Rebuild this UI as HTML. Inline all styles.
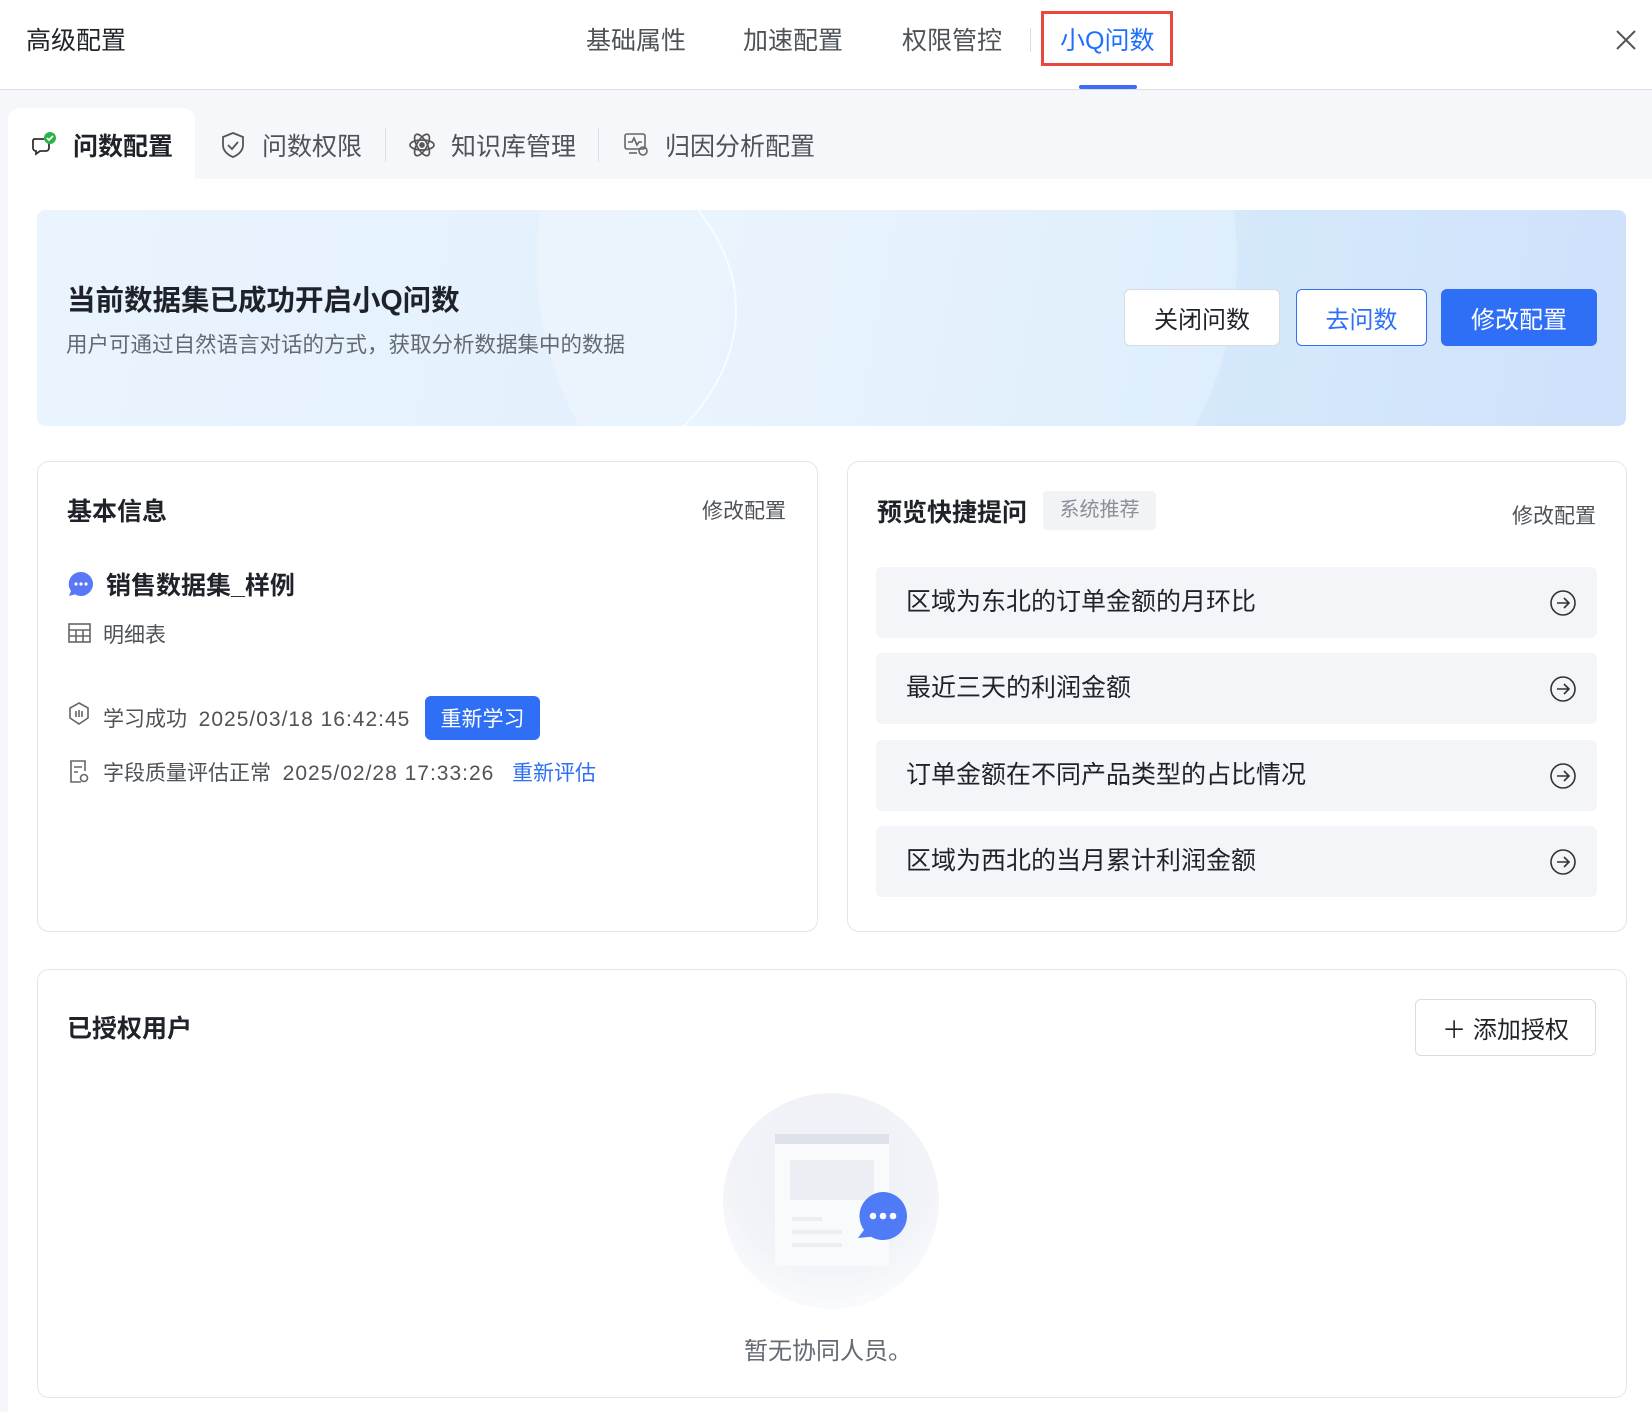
<!DOCTYPE html><html><head><meta charset="utf-8"><style>
*{box-sizing:border-box;margin:0;padding:0}
body{width:1652px;height:1412px;overflow:hidden;background:#fff;font-family:"Liberation Sans","Noto Sans CJK SC",sans-serif;color:#1f2329;position:relative}
.a{position:absolute;white-space:nowrap}
.hdr{position:absolute;left:0;top:0;width:1652px;height:90px;border-bottom:1px solid #dcdee3;background:#fff}
.sub{position:absolute;left:0;top:90px;width:1652px;height:1322px;background:#f6f7fb}
.card{position:absolute;border:1px solid #e3e5ea;border-radius:12px;background:#fff}
.btn{position:absolute;border-radius:6px;display:flex;align-items:center;justify-content:center;font-size:24px}
.row{position:absolute;left:876px;width:721px;height:71px;background:#f3f5f8;border-radius:6px;font-size:25px;color:#1f2329;padding-left:30px;line-height:71px}
.row svg{position:absolute;right:20px;top:22px}
.t{font-size:25px;color:#4e5358}
.d{letter-spacing:1px}
</style></head><body>
<div class="hdr"></div>
<div class="a" style="left:26px;top:21px;font-size:25px;color:#1f2329">高级配置</div>
<div class="a t" style="left:586px;top:21px">基础属性</div>
<div class="a t" style="left:743px;top:21px">加速配置</div>
<div class="a t" style="left:902px;top:21px">权限管控</div>
<div class="a" style="left:1030px;top:28px;width:1px;height:24px;background:#dcdee3"></div>
<div class="a" style="left:1041px;top:11px;width:132px;height:55px;border:3px solid #e8473d"></div>
<div class="a" style="left:1060px;top:21px;font-size:25px;color:#1f6fff">小Q问数</div>
<div class="a" style="left:1079px;top:85px;width:58px;height:4px;background:#3a6cf6;border-radius:2px"></div>
<svg class="a" style="left:1614px;top:28px" width="24" height="24" viewBox="0 0 24 24"><path d="M3 3L21 21M21 3L3 21" stroke="#555" stroke-width="2"/></svg>
<div class="sub"></div>
<div class="a" style="left:8px;top:108px;width:187px;height:80px;background:#fff;border-radius:12px 12px 0 0"></div>
<div class="a" style="left:8px;top:179px;width:1644px;height:1233px;background:#fff;border-radius:12px 0 0 0"></div>
<svg class="a" style="left:30px;top:131px" width="28" height="28" viewBox="0 0 28 28"><path d="M4 8h12a3 3 0 0 1 3 3v6a3 3 0 0 1-3 3H10l-4 3v-3a3 3 0 0 1-3-3v-6a3 3 0 0 1 1-3z" fill="none" stroke="#333" stroke-width="1.8"/><circle cx="20" cy="7" r="6" fill="#2bb34a"/><path d="M17 7l2 2 4-4" stroke="#fff" stroke-width="1.8" fill="none"/></svg>
<div class="a" style="left:73px;top:127px;font-size:25px;font-weight:bold;color:#1f2329">问数配置</div>
<svg class="a" style="left:220px;top:131px" width="26" height="28" viewBox="0 0 26 28"><path d="M13 2l10 4v8c0 6-5 10-10 12C8 24 3 20 3 14V6z" fill="none" stroke="#555" stroke-width="1.8"/><path d="M8 14l4 4 6-7" stroke="#555" stroke-width="1.8" fill="none"/></svg>
<div class="a t" style="left:262px;top:127px">问数权限</div>
<div class="a" style="left:385px;top:128px;width:1px;height:34px;background:#dcdee3"></div>
<svg class="a" style="left:408px;top:131px" width="28" height="28" viewBox="0 0 28 28" fill="none" stroke="#555" stroke-width="1.7"><ellipse cx="14" cy="14" rx="12" ry="5"/><ellipse cx="14" cy="14" rx="12" ry="5" transform="rotate(60 14 14)"/><ellipse cx="14" cy="14" rx="12" ry="5" transform="rotate(-60 14 14)"/><circle cx="14" cy="14" r="2" fill="#555"/></svg>
<div class="a t" style="left:451px;top:127px">知识库管理</div>
<div class="a" style="left:598px;top:128px;width:1px;height:34px;background:#dcdee3"></div>
<svg class="a" style="left:623px;top:131px" width="28" height="28" viewBox="0 0 28 28" fill="none" stroke="#666" stroke-width="1.6"><rect x="2" y="3" width="20" height="15" rx="2"/><path d="M5 11h4l2-4 3 7 2-3h3"/><circle cx="20" cy="20" r="4"/><path d="M6 22h8"/></svg>
<div class="a t" style="left:665px;top:127px">归因分析配置</div>
<div class="a" style="left:37px;top:210px;width:1589px;height:216px;border-radius:8px;overflow:hidden;background:linear-gradient(100deg,#eaf4fe 0%,#e3f0fd 40%,#d6eafb 70%,#cfe1fb 100%)">
<div style="position:absolute;left:-200px;top:-150px;width:900px;height:500px;border-radius:50%;border:2px solid rgba(255,255,255,.7)"></div>
<div style="position:absolute;left:500px;top:-300px;width:700px;height:700px;border-radius:50%;background:rgba(255,255,255,.25)"></div>
</div>
<div class="a" style="left:67px;top:278px;font-size:28.5px;font-weight:bold;color:#1f2329">当前数据集已成功开启小Q问数</div>
<div class="a" style="left:66px;top:328px;font-size:21.5px;color:#646a73">用户可通过自然语言对话的方式，获取分析数据集中的数据</div>
<div class="btn" style="left:1124px;top:289px;width:156px;height:57px;background:#fff;border:1px solid #d8dbe0;color:#1f2329">关闭问数</div>
<div class="btn" style="left:1296px;top:289px;width:131px;height:57px;background:#fff;border:1px solid #2f6ff5;color:#2f6ff5">去问数</div>
<div class="btn" style="left:1441px;top:289px;width:156px;height:57px;background:#2f6ff5;color:#fff">修改配置</div>
<div class="card" style="left:37px;top:461px;width:781px;height:471px"></div>
<div class="a" style="left:67px;top:492px;font-size:25px;font-weight:bold">基本信息</div>
<div class="a" style="left:702px;top:495px;font-size:21px;color:#4e5358">修改配置</div>
<svg class="a" style="left:68px;top:571px" width="26" height="26" viewBox="0 0 26 26"><path d="M13 1a12 12 0 1 1-6 22.4L1 25l2-5A12 12 0 0 1 13 1z" fill="#5878f5"/><circle cx="8" cy="13" r="1.6" fill="#fff"/><circle cx="13" cy="13" r="1.6" fill="#fff"/><circle cx="18" cy="13" r="1.6" fill="#fff"/></svg>
<div class="a" style="left:106px;top:566px;font-size:25px;font-weight:bold">销售数据集_样例</div>
<svg class="a" style="left:68px;top:622px" width="23" height="22" viewBox="0 0 23 22" fill="none" stroke="#666" stroke-width="1.6"><rect x="1" y="2" width="21" height="18"/><path d="M1 8h21M1 14h21M8 8v12M15 8v12"/></svg>
<div class="a" style="left:103px;top:619px;font-size:21px;color:#4e5358">明细表</div>
<svg class="a" style="left:68px;top:702px" width="22" height="24" viewBox="0 0 22 24" fill="none" stroke="#666" stroke-width="1.6"><path d="M11 1l9 5v10l-9 6-9-6V6z"/><path d="M8 9v6M11 8v7M14 9v6"/></svg>
<div class="a" style="left:103px;top:703px;font-size:21px;color:#4e5358">学习成功&nbsp;&nbsp;<span class="d">2025/03/18 16:42:45</span></div>
<div class="btn" style="left:425px;top:696px;width:115px;height:44px;background:#2f6ff5;color:#fff;font-size:21px">重新学习</div>
<svg class="a" style="left:68px;top:759px" width="22" height="25" viewBox="0 0 22 25" fill="none" stroke="#666" stroke-width="1.6"><path d="M13 23H3V2h14v10"/><path d="M6 8h8M6 13h4"/><circle cx="16" cy="19" r="3.5"/></svg>
<div class="a" style="left:103px;top:757px;font-size:21px;color:#4e5358">字段质量评估正常&nbsp;&nbsp;<span class="d">2025/02/28 17:33:26</span></div>
<div class="a" style="left:512px;top:757px;font-size:21px;color:#2f6ff5">重新评估</div>
<div class="card" style="left:847px;top:461px;width:780px;height:471px"></div>
<div class="a" style="left:877px;top:493px;font-size:25px;font-weight:bold">预览快捷提问</div>
<div class="a" style="left:1043px;top:491px;width:113px;height:39px;background:#f2f3f5;border-radius:4px;font-size:20px;color:#8a8f99;text-align:center;line-height:39px">系统推荐</div>
<div class="a" style="left:1512px;top:500px;font-size:21px;color:#4e5358">修改配置</div>
<div class="row" style="top:567px">区域为东北的订单金额的月环比<svg width="28" height="28" viewBox="0 0 28 28" fill="none" stroke="#333" stroke-width="1.6"><circle cx="14" cy="14" r="12"/><path d="M8 14h12M15 9l5 5-5 5"/></svg></div>
<div class="row" style="top:653px">最近三天的利润金额<svg width="28" height="28" viewBox="0 0 28 28" fill="none" stroke="#333" stroke-width="1.6"><circle cx="14" cy="14" r="12"/><path d="M8 14h12M15 9l5 5-5 5"/></svg></div>
<div class="row" style="top:740px">订单金额在不同产品类型的占比情况<svg width="28" height="28" viewBox="0 0 28 28" fill="none" stroke="#333" stroke-width="1.6"><circle cx="14" cy="14" r="12"/><path d="M8 14h12M15 9l5 5-5 5"/></svg></div>
<div class="row" style="top:826px">区域为西北的当月累计利润金额<svg width="28" height="28" viewBox="0 0 28 28" fill="none" stroke="#333" stroke-width="1.6"><circle cx="14" cy="14" r="12"/><path d="M8 14h12M15 9l5 5-5 5"/></svg></div>
<div class="card" style="left:37px;top:969px;width:1590px;height:429px"></div>
<div class="a" style="left:67px;top:1009px;font-size:25px;font-weight:bold">已授权用户</div>
<div class="btn" style="left:1415px;top:999px;width:181px;height:57px;background:#fff;border:1px solid #d8dbe0;color:#1f2329">＋ 添加授权</div>
<div class="a" style="left:723px;top:1093px;width:216px;height:216px;border-radius:50%;background:radial-gradient(circle at 50% 35%,#eef1f8 0%,#f1f3f8 55%,#fafbfd 80%,#fff 100%)"></div>
<div class="a" style="left:775px;top:1134px;width:114px;height:132px;background:#f9fafc;border-top:10px solid #dde1e9"></div>
<div class="a" style="left:790px;top:1160px;width:84px;height:40px;background:#eceef3"></div>
<div class="a" style="left:792px;top:1217px;width:30px;height:4px;background:#eceef2"></div>
<div class="a" style="left:792px;top:1230px;width:50px;height:4px;background:#eceef2"></div>
<div class="a" style="left:792px;top:1243px;width:50px;height:4px;background:#eceef2"></div>
<svg class="a" style="left:854px;top:1190px" width="54" height="52" viewBox="0 0 54 52"><path d="M29 2a24 24 0 1 1-12 44.8L4 48l6-8A24 24 0 0 1 29 2z" fill="#4f7cf6"/><circle cx="19" cy="26" r="3.3" fill="#fff"/><circle cx="29" cy="26" r="3.3" fill="#fff"/><circle cx="39" cy="26" r="3.3" fill="#fff"/></svg>
<div class="a" style="left:744px;top:1331px;font-size:24px;color:#646a73">暂无协同人员。</div>
</body></html>
